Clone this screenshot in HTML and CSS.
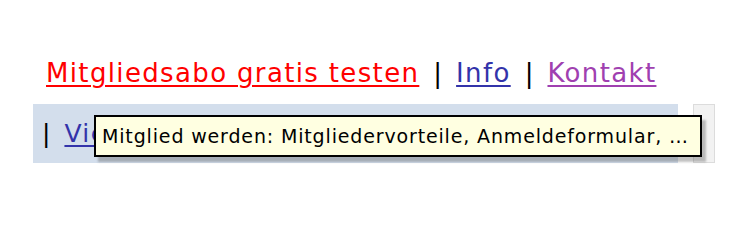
FILE: index.html
```html
<!DOCTYPE html>
<html>
<head>
<meta charset="utf-8">
<link rel="stylesheet" href="styles.css">
</head>
<body>
<div class="page">
  <div class="topnav">
    <a class="lnk red" href="#">Mitgliedsabo gratis testen</a><span class="sep">|</span><a class="lnk blue" href="#">Info</a><span class="sep">|</span><a class="lnk purple" href="#">Kontakt</a>
  </div>
  <div class="row">
    <div class="bar">
      <span class="sep2">|</span><a class="lnk blue small" href="#">Vie</a>
    </div>
    <div class="side"></div>
    <div class="tooltip">Mitglied werden: Mitgliedervorteile, Anmeldeformular, …</div>
  </div>
</div>
</body>
</html>
```
FILE: styles.css
```css
html, body {
  margin: 0;
  padding: 0;
  background: #ffffff;
}
.page {
  font-family: "DejaVu Sans", Verdana, sans-serif;
  width: 750px;
  height: 222px;
  overflow: hidden;
}
.topnav {
  padding: 58px 0 0 46px;
  font-size: 26px;
  line-height: 30px;
  height: 30px;
  white-space: nowrap;
}
.lnk {
  text-decoration: underline;
  text-decoration-thickness: 2px;
  text-underline-offset: 3px;
  letter-spacing: 1.35px;
}
.red { color: #ff0000; }
.blue { color: #3333aa; }
.purple { color: #a040b0; }
.sep {
  color: #000;
  margin: 0 14px;
}
.row {
  position: relative;
  display: flex;
  margin: 16px 0 0 33px;
  height: 59px;
}
.bar {
  width: 645px;
  background: #d3deec;
  display: flex;
  align-items: center;
  padding-left: 9px;
  box-sizing: border-box;
  font-size: 25px;
  white-space: nowrap;
  overflow: hidden;
}
.sep2 {
  color: #000;
  margin-right: 14px;
}
.side {
  width: 22px;
  margin-left: 15px;
  background: #f2f2f2;
  border: 1px solid #dcdcdc;
  box-sizing: border-box;
}
.tooltip {
  position: absolute;
  left: 61px;
  top: 11px;
  width: 608px;
  height: 42px;
  box-sizing: border-box;
  background: #ffffe1;
  border: 2px solid #000;
  box-shadow: 4px 5px 2px rgba(80, 80, 80, 0.35);
  font-size: 19px;
  letter-spacing: 0.85px;
  line-height: 38px;
  padding-left: 6px;
  color: #000;
  white-space: nowrap;
}
```
